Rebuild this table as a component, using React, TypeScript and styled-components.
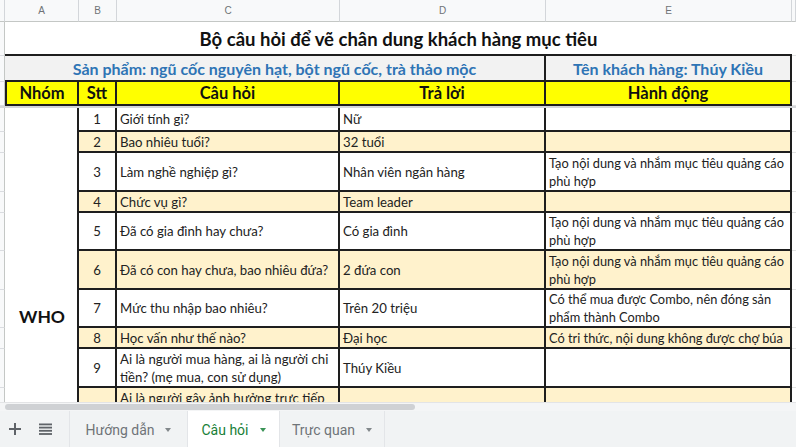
import React from "react";
import styled, { createGlobalStyle, css } from "styled-components";

const GlobalStyle = createGlobalStyle`
  html, body { margin: 0; padding: 0; background: #ffffff; overflow: hidden; }
  body { font-family: Lato, "Open Sans", "Noto Sans", sans-serif; }
  * { box-sizing: border-box; }
`;

const DARK = "#1e1e1e";
const LINE = 2;

const Page = styled.div`
  width: 796px;
  height: 447px;
  display: flex;
  flex-direction: column;
  overflow: hidden;
`;

const Sheet = styled.div<{ $rows: string }>`
  height: 402px;
  flex: none;
  overflow: hidden;
  display: grid;
  grid-template-columns: 5px 74px 38px 223px 206px 246px 1fr;
  grid-template-rows: ${(p) => p.$rows};
  align-content: start;
`;

type Place = { $r: number; $c: number; $rs?: number; $cs?: number };

const placed = css<Place>`
  grid-row: ${(p) => `${p.$r} / span ${p.$rs ?? 1}`};
  grid-column: ${(p) => `${p.$c} / span ${p.$cs ?? 1}`};
`;

const ColHead = styled.div<Place>`
  ${placed};
  background: #f8f9fa;
  border-right: 1px solid #d3d6da;
  border-bottom: 1px solid #c4c7c5;
  color: #6f7377;
  font-family: "Liberation Sans", Arial, sans-serif;
  font-size: 10px;
  display: flex;
  align-items: center;
  justify-content: center;
`;

const RowNum = styled.div<Place>`
  ${placed};
  background: #f8f9fa;
  border-right: 1px solid #c4c7c5;
  border-bottom: 1px solid #dadce0;
`;

const Edge = styled.div<Place>`
  ${placed};
  background: #ffffff;
  border-bottom: 1px solid #e2e3e3;
`;

const Freeze = styled.div<Place>`
  ${placed};
  background: #d4d6d9;
`;

const TitleCell = styled.div<Place>`
  ${placed};
  background: #ffffff;
  border-bottom: ${LINE}px solid ${DARK};
  display: flex;
  align-items: center;
  justify-content: center;
  font-weight: 700;
  font-size: 18.5px;
  color: #111;
  padding-top: 2px;
`;

const InfoCell = styled.div<Place>`
  ${placed};
  background: #f2f2f2;
  border-right: ${LINE}px solid ${DARK};
  border-bottom: ${LINE}px solid ${DARK};
  display: flex;
  align-items: center;
  justify-content: center;
  font-weight: 700;
  font-size: 16px;
  color: #2e74b5;
  white-space: nowrap;
`;

const HeadCell = styled.div<Place & { $first?: boolean }>`
  ${placed};
  background: #ffff00;
  border-right: ${LINE}px solid ${DARK};
  border-bottom: ${LINE}px solid ${DARK};
  border-left: ${(p) => (p.$first ? `${LINE}px solid ${DARK}` : "none")};
  display: flex;
  align-items: center;
  justify-content: center;
  font-weight: 700;
  font-size: 16.5px;
  color: #111;
`;

const GroupCell = styled.div<Place>`
  ${placed};
  background: #ffffff;
  border-right: ${LINE}px solid ${DARK};
  display: flex;
  align-items: center;
  justify-content: center;
  font-weight: 700;
  font-size: 17.5px;
  color: #111;
  padding-left: 2px;
`;

const DataCell = styled.div<Place & { $alt?: boolean; $center?: boolean; $small?: boolean }>`
  ${placed};
  background: ${(p) => (p.$alt ? "#fff2cc" : "#ffffff")};
  border-right: ${LINE}px solid ${DARK};
  border-bottom: ${LINE}px solid ${DARK};
  display: flex;
  align-items: center;
  justify-content: ${(p) => (p.$center ? "center" : "flex-start")};
  padding: 0 3px;
  font-size: ${(p) => (p.$small ? "12.8px" : "13.2px")};
  line-height: 18px;
  color: #222;
  white-space: pre;
  overflow: hidden;
`;

const ScrollRow = styled.div`
  height: 9px;
  flex: none;
  background: #f4f5f6;
  border-top: 1px solid #e3e4e6;
  display: flex;
  align-items: center;
  padding-left: 5px;
`;

const Thumb = styled.div`
  width: 410px;
  height: 6px;
  border-radius: 3px;
  background: #cfd1d4;
`;

const TabBar = styled.div`
  flex: 1;
  background: #f1f3f4;
  display: flex;
  align-items: stretch;
`;

const IconButton = styled.div`
  width: 30px;
  display: flex;
  align-items: center;
  justify-content: center;
  color: #5f6368;
`;

const Tab = styled.div<{ $active?: boolean; $w: number }>`
  width: ${(p) => p.$w}px;
  display: flex;
  align-items: center;
  justify-content: center;
  gap: 11px;
  font-family: Roboto, "Noto Sans", sans-serif;
  font-size: 14px;
  color: ${(p) => (p.$active ? "#188038" : "#6f7478")};
  background: ${(p) => (p.$active ? "#ffffff" : "transparent")};
  border-right: 1px solid #e3e5e8;
  padding-top: 2px;
`;

const TabsStart = styled.div`
  width: 10px;
  border-right: 1px solid #e3e5e8;
`;

const Caret = styled.span`
  width: 0;
  height: 0;
  border-left: 3.5px solid transparent;
  border-right: 3.5px solid transparent;
  border-top: 4px solid currentColor;
  opacity: 0.85;
`;

type Row = { n: number; q: string; a: string; act: string; h: number };

const rows: Row[] = [
  { n: 1, q: "Giới tính gì?", a: "Nữ", act: "", h: 24 },
  { n: 2, q: "Bao nhiêu tuổi?", a: "32 tuổi", act: "", h: 21 },
  {
    n: 3,
    q: "Làm nghề nghiệp gì?",
    a: "Nhân viên ngân hàng",
    act: "Tạo nội dung và nhắm mục tiêu quảng cáo\nphù hợp",
    h: 39,
  },
  { n: 4, q: "Chức vụ gì?", a: "Team leader", act: "", h: 21 },
  {
    n: 5,
    q: "Đã có gia đình hay chưa?",
    a: "Có gia đình",
    act: "Tạo nội dung và nhắm mục tiêu quảng cáo\nphù hợp",
    h: 38,
  },
  {
    n: 6,
    q: "Đã có con hay chưa, bao nhiêu đứa?",
    a: "2 đứa con",
    act: "Tạo nội dung và nhắm mục tiêu quảng cáo\nphù hợp",
    h: 39,
  },
  {
    n: 7,
    q: "Mức thu nhập bao nhiêu?",
    a: "Trên 20 triệu",
    act: "Có thể mua được Combo, nên đóng sản\nphẩm thành Combo",
    h: 38,
  },
  {
    n: 8,
    q: "Học vấn như thế nào?",
    a: "Đại học",
    act: "Có tri thức, nội dung không được chợ búa",
    h: 21,
  },
  {
    n: 9,
    q: "Ai là người mua hàng, ai là người chi\ntiền? (mẹ mua, con sử dụng)",
    a: "Thúy Kiều",
    act: "",
    h: 39,
  },
  {
    n: 10,
    q: "Ai là người gây ảnh hưởng trực tiếp\nđến quyết định mua?",
    a: "",
    act: "",
    h: 39,
  },
  { n: 11, q: "", a: "", act: "", h: 98 },
];

const headRows = [22, 34, 26, 24, 2];
const FIRST_DATA = headRows.length + 1;
const rowTemplate = [...headRows, ...rows.map((r) => r.h)].map((h) => `${h}px`).join(" ");

const ListIcon = () => (
  <svg width="13" height="12" viewBox="0 0 13 12" fill="#5f6368">
    <rect x="0" y="0.5" width="13" height="1.8" />
    <rect x="0" y="3.7" width="13" height="1.8" />
    <rect x="0" y="6.9" width="13" height="1.8" />
    <rect x="0" y="10.1" width="13" height="1.8" />
  </svg>
);

const PlusIcon = () => (
  <svg width="12" height="12" viewBox="0 0 12 12" fill="#5f6368">
    <rect x="5" y="0" width="2" height="12" />
    <rect x="0" y="5" width="12" height="2" />
  </svg>
);

export default function App() {
  const letters = ["A", "B", "C", "D", "E", ""];
  return (
    <Page>
      <GlobalStyle />
      <Sheet $rows={rowTemplate}>
        <ColHead $r={1} $c={1} />
        {letters.map((l, i) => (
          <ColHead key={i} $r={1} $c={i + 2}>
            {l}
          </ColHead>
        ))}

        {[2, 3, 4].map((r) => (
          <RowNum key={r} $r={r} $c={1} />
        ))}
        <TitleCell $r={2} $c={2} $cs={5}>
          Bộ câu hỏi để vẽ chân dung khách hàng mục tiêu
        </TitleCell>
        <Edge $r={2} $c={7} />

        <InfoCell $r={3} $c={2} $cs={4}>
          Sản phẩm: ngũ cốc nguyên hạt, bột ngũ cốc, trà thảo mộc
        </InfoCell>
        <InfoCell $r={3} $c={6}>
          Tên khách hàng: Thúy Kiều
        </InfoCell>
        <Edge $r={3} $c={7} />

        <HeadCell $r={4} $c={2} $first>
          Nhóm
        </HeadCell>
        <HeadCell $r={4} $c={3}>Stt</HeadCell>
        <HeadCell $r={4} $c={4}>Câu hỏi</HeadCell>
        <HeadCell $r={4} $c={5}>Trả lời</HeadCell>
        <HeadCell $r={4} $c={6}>Hành động</HeadCell>
        <Edge $r={4} $c={7} />

        <Freeze $r={5} $c={1} $cs={7} />

        <GroupCell $r={FIRST_DATA} $c={2} $rs={rows.length}>
          WHO
        </GroupCell>

        {rows.map((row, i) => {
          const r = FIRST_DATA + i;
          const alt = row.n % 2 === 0;
          return (
            <React.Fragment key={row.n}>
              <RowNum $r={r} $c={1} />
              <DataCell $r={r} $c={3} $alt={alt} $center>
                {row.n}
              </DataCell>
              <DataCell $r={r} $c={4} $alt={alt}>
                {row.q}
              </DataCell>
              <DataCell $r={r} $c={5} $alt={alt}>
                {row.a}
              </DataCell>
              <DataCell $r={r} $c={6} $alt={alt} $small>
                {row.act}
              </DataCell>
              <Edge $r={r} $c={7} />
            </React.Fragment>
          );
        })}
      </Sheet>
      <ScrollRow>
        <Thumb />
      </ScrollRow>
      <TabBar>
        <IconButton>
          <PlusIcon />
        </IconButton>
        <IconButton>
          <ListIcon />
        </IconButton>
        <TabsStart />
        <Tab $w={118}>
          Hướng dẫn <Caret />
        </Tab>
        <Tab $w={92} $active>
          Câu hỏi <Caret />
        </Tab>
        <Tab $w={105}>
          Trực quan <Caret />
        </Tab>
      </TabBar>
    </Page>
  );
}
